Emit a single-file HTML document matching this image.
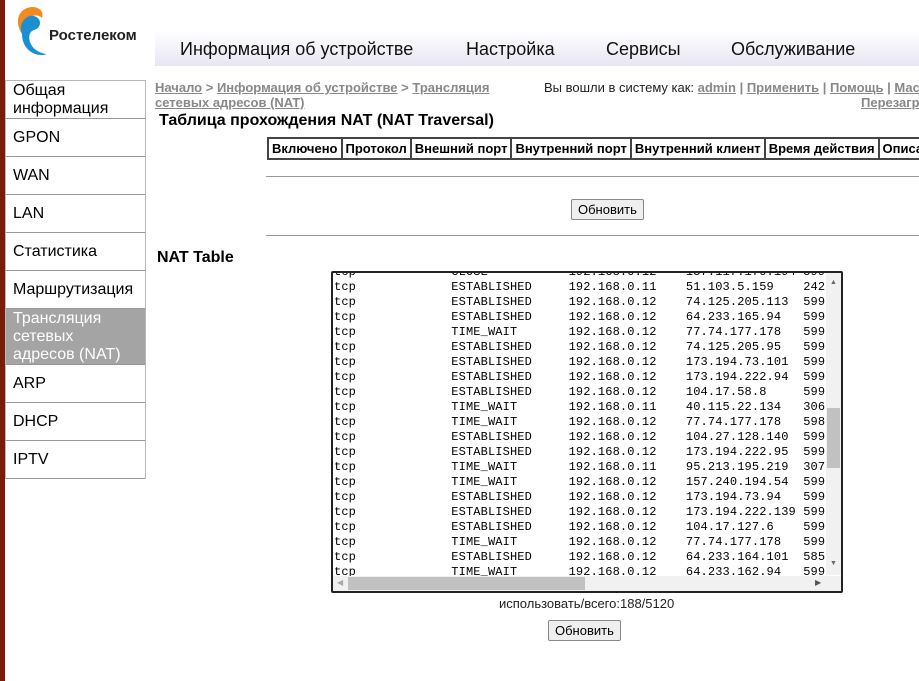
<!DOCTYPE html>
<html><head><meta charset="utf-8"><style>
body{margin:0;width:919px;height:681px;overflow:hidden;background:#fff;font-family:"Liberation Sans",Arial,sans-serif;position:relative}
.a{position:absolute}
.strip{left:0;top:0;width:5px;height:681px;background:#7a1c0c}
.side{left:5px;top:80px;width:139px;border:1px solid #b8b8b8;border-bottom:none}
.side div{height:38px;border-bottom:1px solid #999;font-size:16px;padding-left:7px;box-sizing:border-box;line-height:37px;color:#000}
.side div.t{line-height:18px;padding-top:1px}
.side div.sel{background:#a4a4a4;color:#fff;height:56px}
.nav{left:155px;top:30px;width:764px;height:36px;background:linear-gradient(#fff,#e8e6f2)}
.nav span{position:absolute;top:9px;font-size:18px;color:#111}
.bc{font-size:13px;color:#888;font-weight:bold;text-decoration:underline}
h3{margin:0;font-size:16px;font-weight:bold}
table.h{border-collapse:collapse;font-size:13px;font-weight:bold}
table.h td{border:2px solid #444;padding:0 3px;height:19px;white-space:nowrap}
.btn{font-size:13px;border:1px solid #888;border-radius:2px;background:#efefef;padding:2px 6px}
pre{margin:0;font-family:"Liberation Mono",monospace;font-size:12px;line-height:15px;color:#000;letter-spacing:0.13px}
</style></head><body>
<div class="a strip"></div>
<svg class="a" style="left:14px;top:4px" width="34" height="52" viewBox="0 0 34 52"><path d="M8 30 C0 18 4 4 18 3 C26 3 30 8 28 14 C24 10 16 10 14 18 C12 24 10 28 8 30Z" fill="#f28a1e"/><path d="M8 30 C4 20 12 10 20 12 C28 14 28 24 20 26 C14 28 14 36 18 42 C22 48 30 50 33 50 C22 54 8 46 8 30Z" fill="#1b8fd2"/></svg>
<div class="a" style="left:49px;top:27px;font-size:15px;font-weight:bold;color:#222">Ростелеком</div>
<div class="a nav"><span style="left:25px">Информация об устройстве</span><span style="left:311px">Настройка</span><span style="left:451px">Сервисы</span><span style="left:576px">Обслуживание</span></div>
<div class="a side">
<div class="t">Общая<br>информация</div><div>GPON</div><div>WAN</div><div>LAN</div><div>Статистика</div><div>Маршрутизация</div><div class="t sel">Трансляция<br>сетевых<br>адресов (NAT)</div><div>ARP</div><div>DHCP</div><div>IPTV</div>
</div>
<div class="a" style="left:155px;top:80px;font-size:13px;line-height:15px;color:#888;width:380px"><span class="bc">Начало</span> <b>&gt;</b> <span class="bc">Информация об устройстве</span> <b>&gt;</b> <span class="bc">Трансляция<br>сетевых адресов (NAT)</span></div>
<div class="a" style="left:544px;top:80px;font-size:13px;line-height:15px;color:#222;white-space:nowrap">Вы вошли в систему как: <span class="bc">admin</span> <b style="color:#888">|</b> <span class="bc">Применить</span> <b style="color:#888">|</b> <span class="bc">Помощь</span> <b style="color:#888">|</b> <span class="bc">Мастер</span></div>
<div class="a bc" style="left:861px;top:95px;line-height:15px">Перезагрузка</div>
<h3 class="a" style="left:159px;top:112px">Таблица прохождения NAT (NAT Traversal)</h3>
<table class="a h" style="left:267px;top:137px"><tr><td>Включено</td><td>Протокол</td><td>Внешний порт</td><td>Внутренний порт</td><td>Внутренний клиент</td><td>Время действия</td><td>Описание</td></tr></table>
<div class="a" style="left:266px;top:176px;width:653px;height:1px;background:#999"></div>
<div class="a btn" style="left:571px;top:199px">Обновить</div>
<div class="a" style="left:266px;top:235px;width:653px;height:1px;background:#999"></div>
<h3 class="a" style="left:157px;top:249px">NAT Table</h3>
<div class="a" style="left:331px;top:271px;width:508px;height:318px;border:2px solid #222;border-radius:2px;overflow:hidden;background:#fff">
<pre class="a" style="left:1px;top:-8px">tcp             CLOSE           192.168.0.12    157.117.170.194 599
tcp             ESTABLISHED     192.168.0.11    51.103.5.159    242
tcp             ESTABLISHED     192.168.0.12    74.125.205.113  599
tcp             ESTABLISHED     192.168.0.12    64.233.165.94   599
tcp             TIME_WAIT       192.168.0.12    77.74.177.178   599
tcp             ESTABLISHED     192.168.0.12    74.125.205.95   599
tcp             ESTABLISHED     192.168.0.12    173.194.73.101  599
tcp             ESTABLISHED     192.168.0.12    173.194.222.94  599
tcp             ESTABLISHED     192.168.0.12    104.17.58.8     599
tcp             TIME_WAIT       192.168.0.11    40.115.22.134   306
tcp             TIME_WAIT       192.168.0.12    77.74.177.178   598
tcp             ESTABLISHED     192.168.0.12    104.27.128.140  599
tcp             ESTABLISHED     192.168.0.12    173.194.222.95  599
tcp             TIME_WAIT       192.168.0.11    95.213.195.219  307
tcp             TIME_WAIT       192.168.0.12    157.240.194.54  599
tcp             ESTABLISHED     192.168.0.12    173.194.73.94   599
tcp             ESTABLISHED     192.168.0.12    173.194.222.139 599
tcp             ESTABLISHED     192.168.0.12    104.17.127.6    599
tcp             TIME_WAIT       192.168.0.12    77.74.177.178   599
tcp             ESTABLISHED     192.168.0.12    64.233.164.101  585
tcp             TIME_WAIT       192.168.0.12    64.233.162.94   599</pre>
<div class="a" style="right:0;top:0;width:15px;height:302px;background:#f1f1f1"><div class="a" style="left:1px;top:135px;width:13px;height:60px;background:#c1c1c1"></div><div class="a" style="left:4px;top:6px;font-size:7px;color:#666">▲</div><div class="a" style="left:4px;top:287px;font-size:7px;color:#666">▼</div></div>
<div class="a" style="left:0;bottom:0;width:508px;height:15px;background:#f1f1f1"><div class="a" style="left:15px;top:1px;width:237px;height:13px;background:#c1c1c1"></div><div class="a" style="left:4px;top:2px;font-size:8px;color:#aaa">◀</div><div class="a" style="left:482px;top:2px;font-size:8px;color:#555">▶</div></div>
</div>
<div class="a" style="left:499px;top:596px;font-size:13px;color:#222">использовать/всего:188/5120</div>
<div class="a btn" style="left:548px;top:620px">Обновить</div>
</body></html>
